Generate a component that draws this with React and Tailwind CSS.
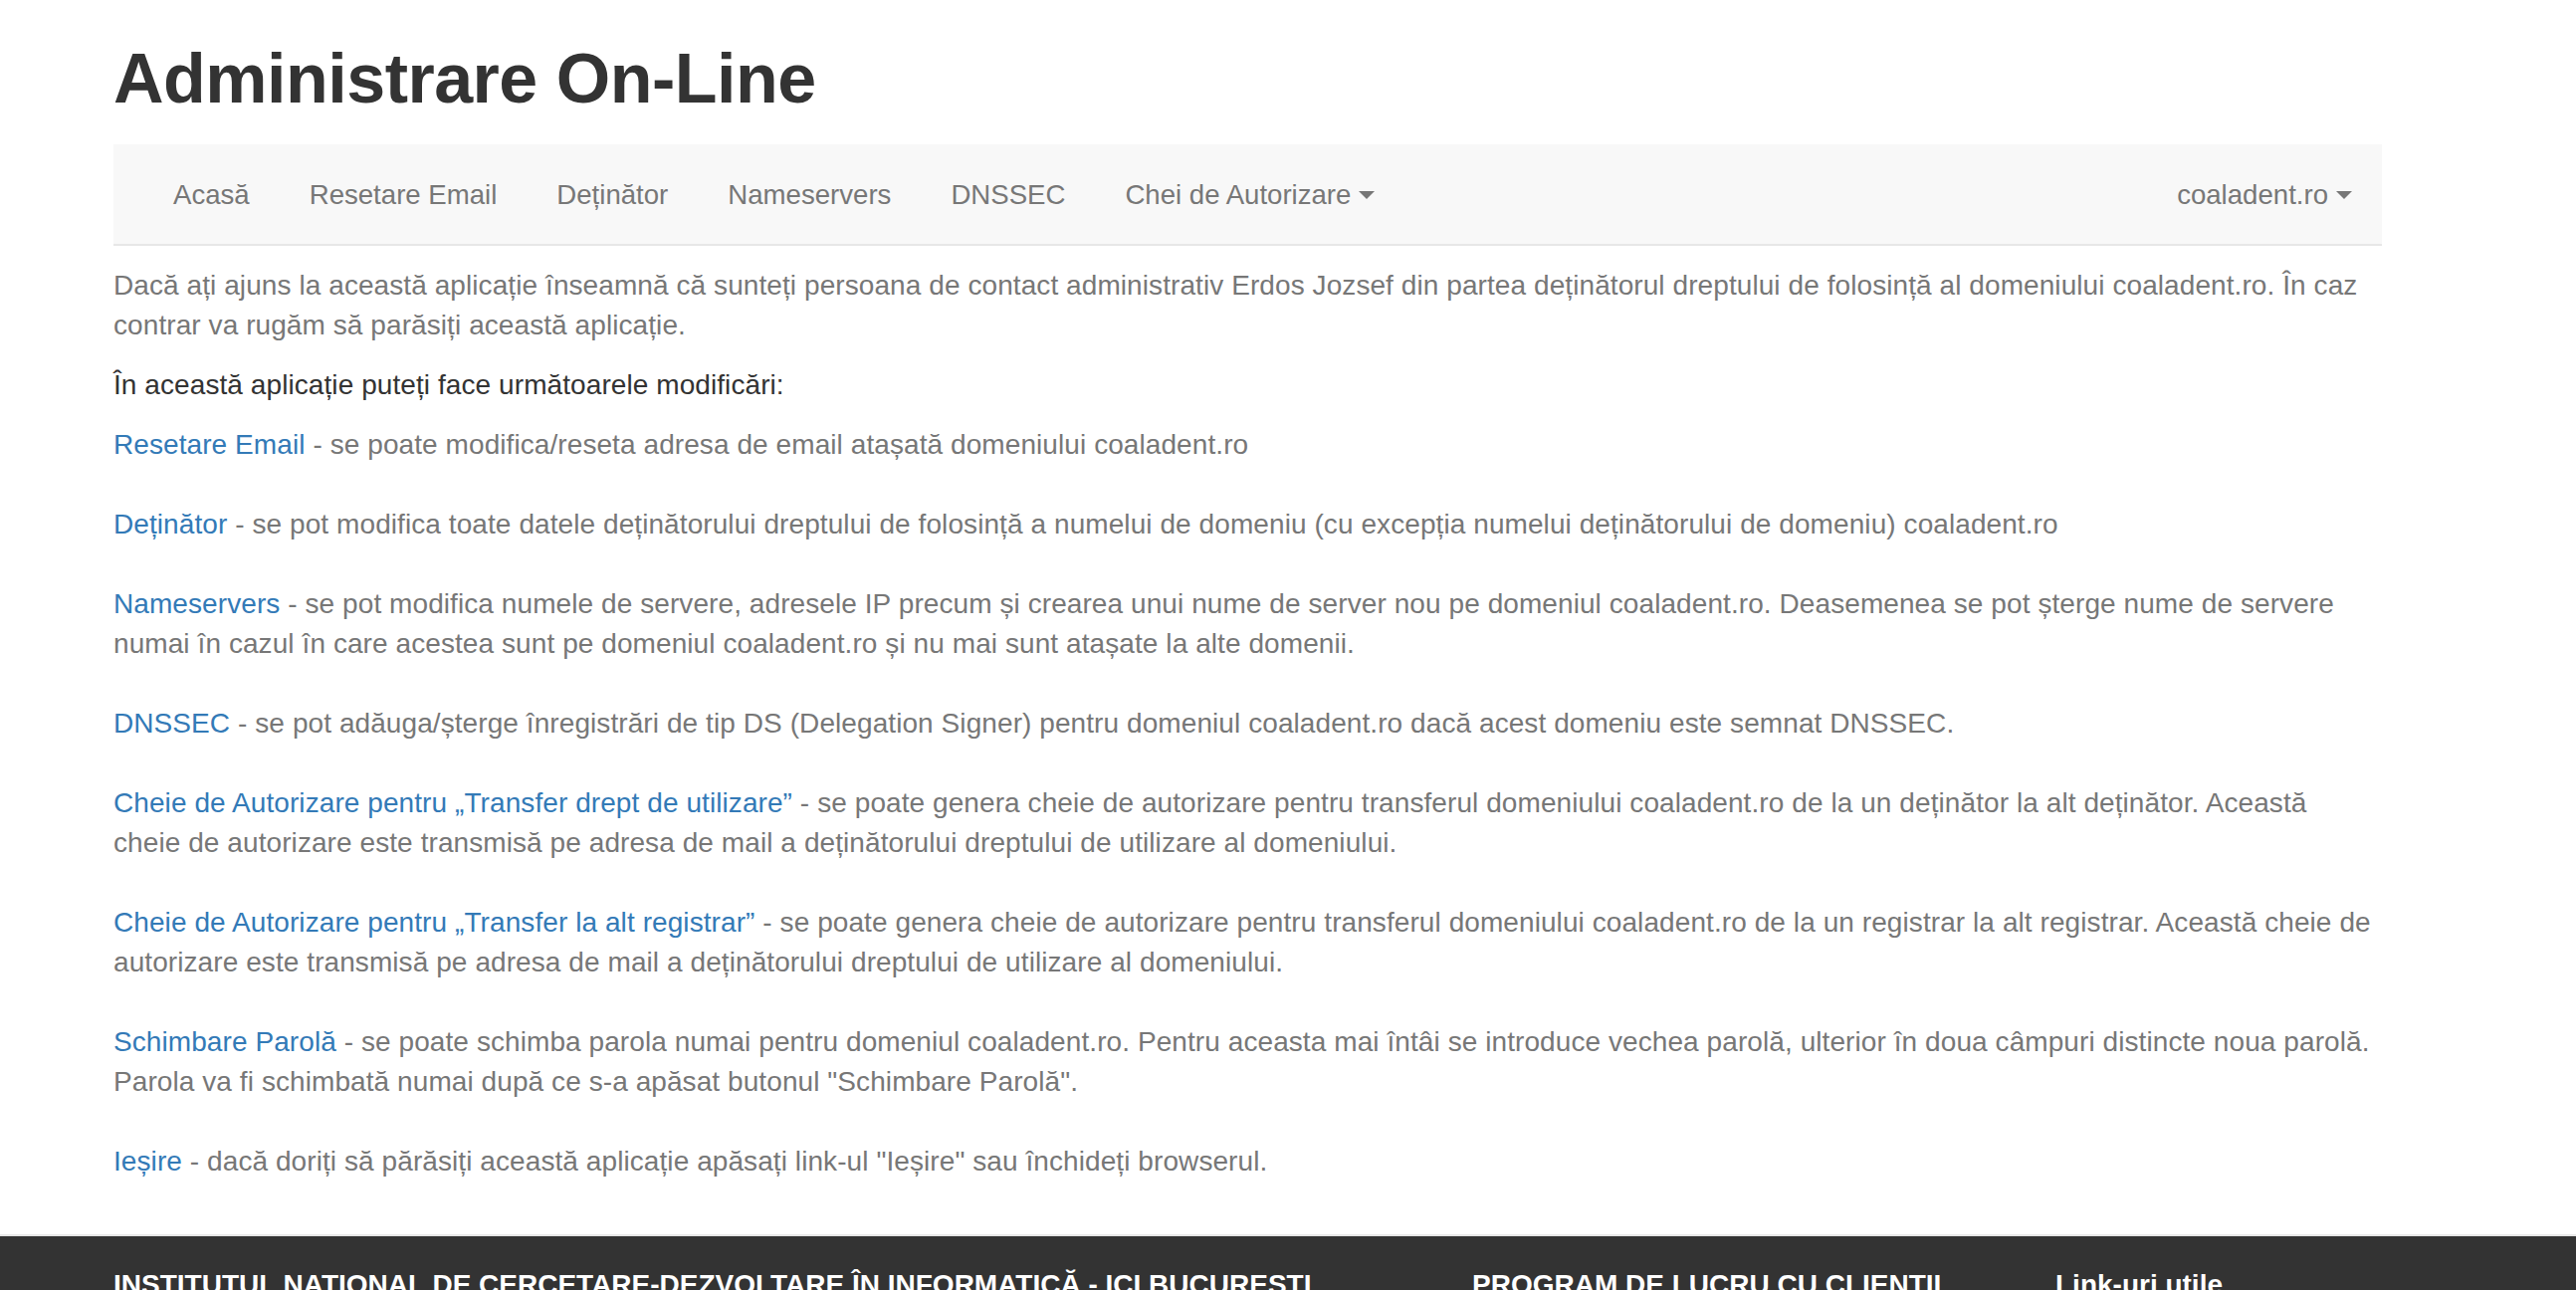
// App.jsx
// Administrare On-Line — domain admin landing page
import React from "react";

const NAV_LEFT = ["Acasă", "Resetare Email", "Deținător", "Nameservers", "DNSSEC"];

const ITEMS = [
  {
    link: "Resetare Email",
    text: [" - se poate modifica/reseta adresa de email atașată domeniului coaladent.ro"],
  },
  {
    link: "Deținător",
    text: [
      " - se pot modifica toate datele deținătorului dreptului de folosință a numelui de domeniu (cu excepția numelui deținătorului de domeniu) coaladent.ro",
    ],
  },
  {
    link: "Nameservers",
    text: [
      " - se pot modifica numele de servere, adresele IP precum și crearea unui nume de server nou pe domeniul coaladent.ro. Deasemenea se pot șterge nume de servere",
      "numai în cazul în care acestea sunt pe domeniul coaladent.ro și nu mai sunt atașate la alte domenii.",
    ],
  },
  {
    link: "DNSSEC",
    text: [
      " - se pot adăuga/șterge înregistrări de tip DS (Delegation Signer) pentru domeniul coaladent.ro dacă acest domeniu este semnat DNSSEC.",
    ],
  },
  {
    link: "Cheie de Autorizare pentru „Transfer drept de utilizare”",
    text: [
      " - se poate genera cheie de autorizare pentru transferul domeniului coaladent.ro de la un deținător la alt deținător. Această",
      "cheie de autorizare este transmisă pe adresa de mail a deținătorului dreptului de utilizare al domeniului.",
    ],
  },
  {
    link: "Cheie de Autorizare pentru „Transfer la alt registrar”",
    text: [
      " - se poate genera cheie de autorizare pentru transferul domeniului coaladent.ro de la un registrar la alt registrar. Această cheie de",
      "autorizare este transmisă pe adresa de mail a deținătorului dreptului de utilizare al domeniului.",
    ],
  },
  {
    link: "Schimbare Parolă",
    text: [
      " - se poate schimba parola numai pentru domeniul coaladent.ro. Pentru aceasta mai întâi se introduce vechea parolă, ulterior în doua câmpuri distincte noua parolă.",
      'Parola va fi schimbată numai după ce s-a apăsat butonul "Schimbare Parolă".',
    ],
  },
  {
    link: "Ieșire",
    text: [' - dacă doriți să părăsiți această aplicație apăsați link-ul "Ieșire" sau închideți browserul.'],
  },
];

function Caret() {
  return (
    <span className="inline-block ml-[8px] align-middle w-0 h-0 border-l-[8px] border-r-[8px] border-t-[8px] border-l-transparent border-r-transparent border-t-[#777] relative top-[-2px]" />
  );
}

export default function App() {
  return (
    <div className="min-h-screen bg-white font-['Liberation_Sans',Arial,sans-serif] text-[28px] leading-[40px]">
      <div className="ml-[114px] w-[2279px]">
        {/* Page title */}
        <h1 className="pt-[40px] mb-[26px] text-[70px] leading-[1.13] font-bold text-[#333] tracking-[-0.5px]">
          Administrare On-Line
        </h1>

        {/* Navbar */}
        <nav className="h-[102px] bg-[#f8f8f8] border-b-2 border-[#e7e7e7] flex justify-between px-[30px] text-[27.6px]">
          <ul className="flex">
            {NAV_LEFT.map((item) => (
              <li key={item} className="px-[30px] pt-[31px] pb-[29px] text-[#777]">
                {item}
              </li>
            ))}
            <li className="px-[30px] pt-[31px] pb-[29px] text-[#777]">
              Chei de Autorizare
              <Caret />
            </li>
          </ul>
          <ul className="flex mr-[-30px]">
            <li className="px-[30px] pt-[31px] pb-[29px] text-[#777]">
              coaladent.ro
              <Caret />
            </li>
          </ul>
        </nav>

        {/* Intro */}
        <div className="mt-[20px] tracking-[0.08px]">
          <p className="text-[#777] mb-[20px]">
            Dacă ați ajuns la această aplicație înseamnă că sunteți persoana de contact administrativ Erdos Jozsef din partea deținătorul dreptului de folosință al domeniului coaladent.ro. În caz
            <br />
            contrar va rugăm să parăsiți această aplicație.
          </p>
          <p className="text-[#333] mb-[20px]">În această aplicație puteți face următoarele modificări:</p>

          {ITEMS.map((item) => (
            <p key={item.link} className="text-[#777] mb-[40px]">
              <a href="#" className="text-[#337ab7]">
                {item.link}
              </a>
              {item.text.map((line, i) => (
                <React.Fragment key={i}>
                  {i > 0 && <br />}
                  {line}
                </React.Fragment>
              ))}
            </p>
          ))}
        </div>
      </div>

      {/* Footer */}
      <footer className="mt-[53px] border-t-2 border-[#e7e7e7] bg-[#333] pt-[29px] pb-[60px] text-white">
        <div className="ml-[114px] w-[2279px] flex font-['Liberation_Sans',Arial,sans-serif]">
          <div className="w-[1365px]">
            <h4 className="text-[28px] leading-[40px] font-bold uppercase">
              INSTITUTUL NATIONAL DE CERCETARE-DEZVOLTARE ÎN INFORMATICĂ - ICI BUCURESTI
            </h4>
            <p className="text-[24px] mt-[16px] text-[#ccc]">Bd. Mareșal Averescu nr. 8-10, Sector 1, București</p>
          </div>
          <div className="w-[586px]">
            <h4 className="text-[28px] leading-[40px] font-bold uppercase">PROGRAM DE LUCRU CU CLIENTII</h4>
            <p className="text-[24px] mt-[16px] text-[#ccc]">Luni - Vineri: 09:00 - 16:00</p>
          </div>
          <div className="flex-1">
            <h4 className="text-[28px] leading-[40px] font-bold">Link-uri utile</h4>
            <p className="text-[24px] mt-[16px] text-[#ccc]">www.rotld.ro</p>
          </div>
        </div>
      </footer>
    </div>
  );
}
